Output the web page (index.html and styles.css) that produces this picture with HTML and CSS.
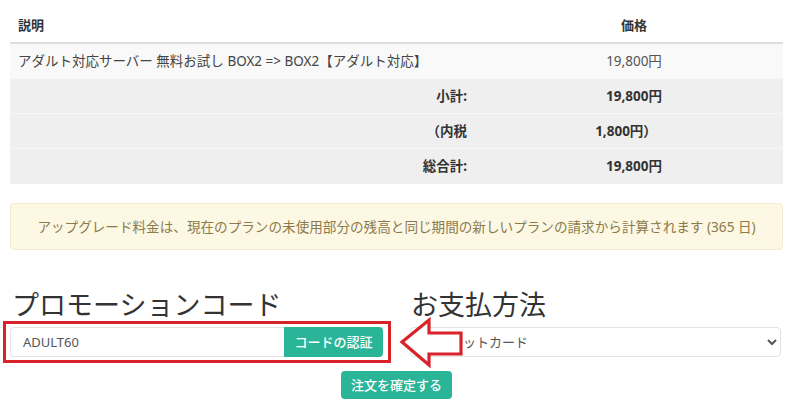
FILE: index.html
```html
<!DOCTYPE html>
<html lang="ja">
<head>
<meta charset="utf-8">
<link rel="stylesheet" href="styles.css">
</head>
<body>
<div class="page">
  <table class="cart">
    <colgroup><col class="col-desc"><col class="col-price"></colgroup>
    <thead>
      <tr><th class="th-desc">説明</th><th class="th-price">価格</th></tr>
    </thead>
    <tbody>
      <tr class="item"><td class="desc">アダルト対応サーバー 無料お試し BOX2 =&gt; BOX2【アダルト対応】</td><td class="price">19,800円</td></tr>
      <tr class="sum"><td class="label">小計:</td><td class="price strong">19,800円</td></tr>
      <tr class="sum"><td class="label">（内税</td><td class="price strong tax">1,800円）</td></tr>
      <tr class="sum"><td class="label">総合計:</td><td class="price strong">19,800円</td></tr>
    </tbody>
  </table>

  <div class="alert">アップグレード料金は、現在のプランの未使用部分の残高と同じ期間の新しいプランの請求から計算されます (365 日)</div>

  <div class="cols">
    <div class="col">
      <h2 class="heading">プロモーションコード</h2>
      <div class="input-group">
        <input class="code-input" type="text" value="ADULT60">
        <button class="btn btn-code" type="button">コードの認証</button>
        <span class="highlight-box"></span>
      </div>
    </div>
    <div class="col">
      <h2 class="heading">お支払方法</h2>
      <div class="select-wrap">
        <select class="pay-select"><option>クレジットカード</option></select>
        <svg class="arrow" width="68" height="54" viewBox="0 0 68 54">
          <path d="M4 26 L31 4 L31 17 L63 17 L63 38 L31 38 L31 49 Z" fill="#fff" stroke="#d9232b" stroke-width="3.2" stroke-linejoin="miter"/>
        </svg>
      </div>
    </div>
  </div>

  <div class="actions">
    <button class="btn btn-order" type="button">注文を確定する</button>
  </div>
</div>
</body>
</html>
```

FILE: styles.css
```css
* { box-sizing: border-box; }
html, body { margin: 0; padding: 0; background: #fff; }
body {
  font-family: "Noto Sans", "Noto Sans CJK JP", sans-serif;
  font-size: 13px;
  color: #333;
}
.page {
  width: 800px;
  padding: 8px 17px 0 10px;
}
.cart {
  width: 773px;
  border-collapse: collapse;
  table-layout: fixed;
  font-size: 13.5px;
}
.col-desc { width: 475px; }
.col-price { width: 298px; }
.cart th, .cart td {
  padding: 8px;
  line-height: 18px;
}
.cart th {
  font-weight: 700;
  font-size: 13px;
  border-bottom: 2px solid #dedede;
  color: #333;
}
.th-desc { text-align: left; }
.th-price { text-align: center; }
.item td { background: #f9f9f9; color: #444; height: 34px; }
.sum td { background: #efefef; border-top: 1px solid #f6f6f6; height: 35px; }
.desc { text-align: left; padding-left: 8px; }
.price { text-align: center; }
.item .price { color: #555; }
.label { text-align: right; font-weight: 700; padding-right: 18px !important; }
.strong { font-weight: 700; }
.tax { padding-right: 24px !important; }

.alert {
  margin-top: 19px;
  width: 773px;
  background: #fcf8e3;
  border: 1px solid #f3ead0;
  border-radius: 4px;
  color: #8d7a4c;
  font-size: 13.6px;
  line-height: 20px;
  padding: 13px 15px 12px;
  text-align: center;
}

.cols {
  display: grid;
  grid-template-columns: 373px 373px;
  column-gap: 27px;
  margin-top: 39px;
}
.heading {
  margin: 0 0 7px 2px;
  font-size: 27px;
  line-height: 31px;
  font-weight: 400;
  color: #333;
}
.col:last-child .heading { margin-left: 1px; }

.input-group {
  position: relative;
  display: flex;
  height: 30px;
}
.code-input {
  flex: 1;
  min-width: 0;
  height: 30px;
  border: 1px solid #e3e3e3;
  border-right: none;
  border-radius: 4px 0 0 4px;
  padding: 0 12px;
  font-family: inherit;
  font-size: 13px;
  color: #555;
  background: #fff;
}
.btn {
  font-family: inherit;
  border: none;
  color: #fff;
  background: #2ab598;
  font-size: 13px;
  font-weight: 500;
  cursor: pointer;
}
.btn-code {
  width: 99px;
  height: 30px;
  border-radius: 0 4px 4px 0;
  padding: 0;
}
.highlight-box {
  position: absolute;
  left: -7px;
  top: -6px;
  right: -8px;
  bottom: -6px;
  border: 3.5px solid #d9232b;
  pointer-events: none;
}

.select-wrap {
  position: relative;
  height: 30px;
}
.pay-select {
  width: 371px;
  height: 30px;
  border: 1px solid #e3e3e3;
  border-radius: 4px;
  background: #fff;
  padding: 0 9px;
  font-family: inherit;
  font-size: 13px;
  color: #555;
}
.arrow {
  position: absolute;
  left: -12px;
  top: -11px;
}

.actions {
  display: flex;
  justify-content: center;
  margin-top: 14px;
}
.btn-order {
  width: 111px;
  height: 28px;
  border-radius: 4px;
  padding: 0;
}
```
